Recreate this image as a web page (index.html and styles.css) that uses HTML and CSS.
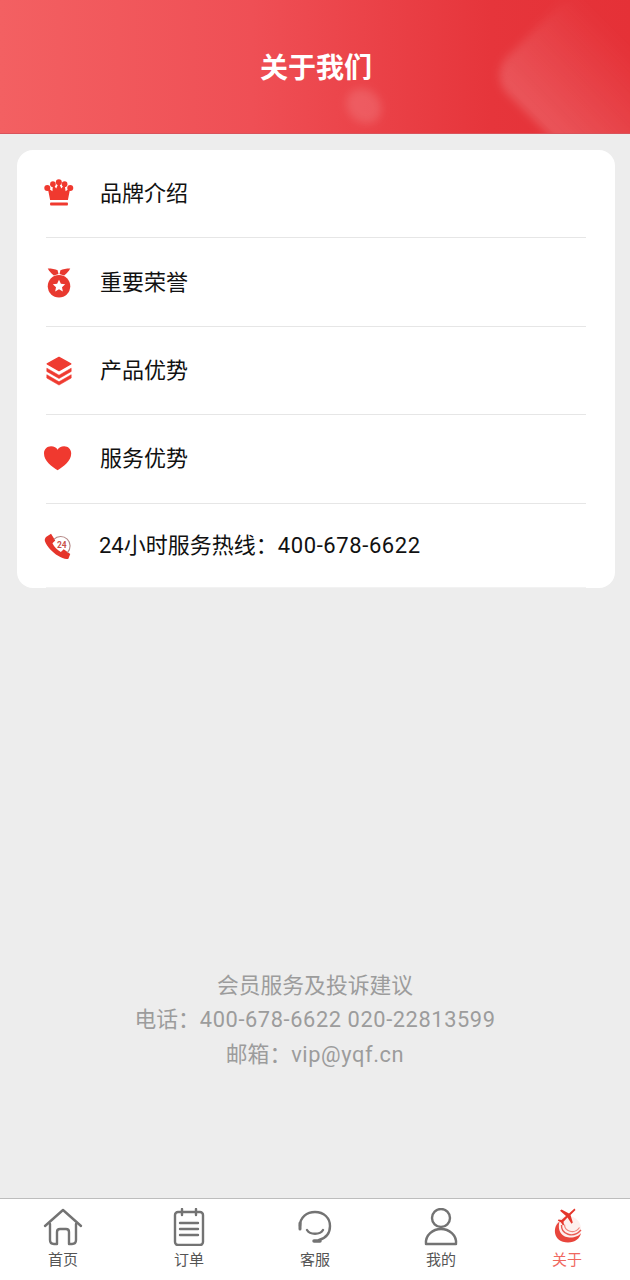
FILE: index.html

```html
<!DOCTYPE html>
<html lang="zh-CN">
<head>
  <meta charset="UTF-8" />
  <title>关于我们</title>
  <link rel="stylesheet" href="styles.css">
</head>
<body>
  <div class="page">
    <header class="top">
      <span class="blob blob-big"></span>
      <span class="blob blob-small"></span>
      <h1>关于我们</h1>
    </header>

    <ul class="card">
      <li class="row">
        <svg class="row-icon" viewBox="0 0 32 32" fill="#f0392f">
          <circle cx="3.5" cy="9.5" r="3.2"/><circle cx="28" cy="9.5" r="3.2"/>
          <circle cx="9.5" cy="5.5" r="3"/><circle cx="22" cy="5.5" r="3"/>
          <circle cx="15.8" cy="3.5" r="3.2"/>
          <path d="M4 9.5 L9 13 L9.5 5.5 L13 10 L15.8 4 L18.5 10 L22 5.5 L23 13 L28 9.5 L25.5 22.5 H6.5 Z"/>
          <rect x="6.5" y="25" width="19" height="3.2" rx="0.8"/>
        </svg>
        <span>品牌介绍</span>
      </li>
      <li class="row">
        <svg class="row-icon" viewBox="0 0 32 32" fill="#e8392f">
          <path d="M4 0.5 C8 0.5 12 1 14.5 2.5 L15.5 6.5 L10.5 8 C8 6 5.5 3.5 4 0.5 Z"/>
          <path d="M28 0.5 C24 0.5 20 1 17.5 2.5 L16.5 6.5 L21.5 8 C24 6 26.5 3.5 28 0.5 Z"/>
          <circle cx="16" cy="19.5" r="12"/>
          <path d="M16 12.5 L18 16.8 L22.6 17.3 L19.2 20.4 L20.1 25 L16 22.7 L11.9 25 L12.8 20.4 L9.4 17.3 L14 16.8 Z" fill="#fff"/>
        </svg>
        <span>重要荣誉</span>
      </li>
      <li class="row">
        <svg class="row-icon" viewBox="0 0 32 32" fill="#ef3b31" stroke="#ef3b31" stroke-linejoin="round">
          <path d="M16 1.5 L28.5 8.5 L16 15.5 L3.5 8.5 Z" stroke-width="1.6"/>
          <path d="M3 13 L16 20.5 L29 13 V16.5 L16 24 L3 16.5 Z" stroke-width="0.6"/>
          <path d="M3 20 L16 27.5 L29 20 V23.5 L16 31 L3 23.5 Z" stroke-width="0.6"/>
        </svg>
        <span>产品优势</span>
      </li>
      <li class="row">
        <svg class="row-icon" viewBox="0 0 32 32" fill="#f0392f">
          <path d="M14.5 28 C8 23.5 0 18 0 10 C0 5.5 3.5 2.5 7.5 2.5 C10.8 2.5 13.3 4 14.5 6 C15.7 4 18.2 2.5 21.5 2.5 C25.5 2.5 29 5.5 29 10 C29 18 21 23.5 14.5 28 Z"/>
        </svg>
        <span>服务优势</span>
      </li>
      <li class="row row-phone">
        <svg class="row-icon" viewBox="0 0 32 32">
          <path d="M2.5 6 L7.5 3 L12 10 L9 13 C11 17 14 20 18 22.5 L21 19.5 L28 24.5 L26 29.5 C23.5 30.5 19 29 15 26.5 C9 23 3 16.5 1 11 C0.5 9 1 7.5 2.5 6 Z" fill="#e5352b"/>
          <path d="M10.5 9 A10 10 0 1 1 25 23" fill="none" stroke="#b58a88" stroke-width="1.2"/>
          <text class="phone-hours" x="19" y="18">24</text>
        </svg>
        <span>24小时服务热线：<span class="num">400-678-6622</span></span>
      </li>
    </ul>

    <div class="contact">
      <p>会员服务及投诉建议</p>
      <p>电话：<span class="num">400-678-6622 020-22813599</span></p>
      <p>邮箱：<span class="num">vip@yqf.cn</span></p>
    </div>

    <nav class="tabs">
      <a class="tab">
        <svg viewBox="0 0 40 38" fill="none" stroke="#737373" stroke-width="2.4" stroke-linejoin="round" stroke-linecap="round">
          <path d="M2 18 L20 2 L38 18"/>
          <path d="M7 16 V32 Q7 36 11 36 H14 V24 Q14 21 17 21 H23 Q26 21 26 24 V36 H29 Q33 36 33 32 V16"/>
        </svg>
        <span>首页</span>
      </a>
      <a class="tab">
        <svg viewBox="0 0 40 38" fill="none" stroke="#737373" stroke-width="2.4" stroke-linecap="round">
          <rect x="6" y="4" width="28" height="33" rx="3"/>
          <path d="M13 1 V7 M27 1 V7 M11 15 H29 M11 21 H29 M11 27 H29"/>
        </svg>
        <span>订单</span>
      </a>
      <a class="tab">
        <svg viewBox="0 0 40 38" fill="none" stroke="#737373" stroke-width="2.4" stroke-linecap="round">
          <path d="M5 18 C5 9 12 4 20 4 C29 4 35 10 35 18 C35 25 31 30 24 32"/>
          <path d="M5 15 V21" stroke-width="3"/>
          <path d="M12 22 C15 27 25 27 28 22"/>
          <path d="M19 33 H25" stroke-width="3.5"/>
        </svg>
        <span>客服</span>
      </a>
      <a class="tab">
        <svg viewBox="0 0 40 38" fill="none" stroke="#737373" stroke-width="2.4" stroke-linejoin="round">
          <circle cx="20" cy="10" r="9"/>
          <path d="M5 36 C4 27 12 21 20 21 C28 21 36 27 35 36 Z"/>
        </svg>
        <span>我的</span>
      </a>
      <a class="tab tab-on">
        <svg viewBox="0 0 40 38">
          <circle cx="21" cy="21" r="13" fill="#fdf0ef"/>
          <path d="M12.5 13.5 C5 19 6 34.5 21 34.5 C28 34.5 33 30.5 34 25 C29 32.5 8 32 12.5 13.5 Z" fill="#e8453c"/>
          <path d="M14.5 17 C14 26 26 31 34 22" fill="none" stroke="#ea5a52" stroke-width="1.4"/>
          <path d="M17.5 16.5 C17.5 23 27 27 32.5 19.5" fill="none" stroke="#f0847c" stroke-width="1.2"/>
          <path d="M27.5 0.5 L22 5.5 L14.5 1.5 L13 2.7 L19 8 L14.5 12 L11.5 11.5 L10.8 12.5 L14 14.5 L16 17.5 L17 16.7 L16.5 13.8 L20.5 9.5 L24.5 15.8 L25.8 14.5 L23.5 7 L28.5 2 Z" fill="#e5352b"/>
        </svg>
        <span>关于</span>
      </a>
    </nav>
  </div>
</body>
</html>
```

FILE: styles.css

```css
* {
  box-sizing: border-box;
}
body {
  margin: 0;
  background: #ededed;
  font-family: Roboto, "Noto Sans CJK SC", sans-serif;
  color: #111;
}
.page {
  display: flex;
  flex-direction: column;
  height: 1280px;
  overflow: hidden;
}

/* red title band */
.top {
  position: relative;
  flex: none;
  height: 134px;
  padding: 48px 0 0 2px;
  overflow: hidden;
  text-align: center;
  background: linear-gradient(90deg, #f36062 0%, #ef4f55 40%, #e6353b 78%, #e53137 100%);
  border-bottom: 1px solid #d9535b;
}
.top h1 {
  position: relative;
  margin: 0;
  font-size: 28px;
  line-height: 42px;
  font-weight: 700;
  color: #fff;
}
.blob {
  position: absolute;
  display: block;
}
.blob-big {
  left: 520px;
  top: 0;
  width: 150px;
  height: 150px;
  border-radius: 26px;
  transform: rotate(45deg);
  background: linear-gradient(0deg, rgba(255,255,255,0.17), rgba(255,255,255,0) 80%);
  filter: blur(4px);
}
.blob-small {
  left: 345px;
  top: 90px;
  width: 38px;
  height: 32px;
  border-radius: 50%;
  transform: rotate(45deg);
  background: rgba(255,255,255,0.13);
  filter: blur(4px);
}

/* menu card */
.card {
  flex: none;
  margin: 16px 15px 0 17px;
  padding: 0 29px;
  list-style: none;
  background: #fff;
  border-radius: 16px;
}
.row {
  display: flex;
  align-items: center;
  gap: 26px;
  height: 88.4px;
  padding-bottom: 5px;
  border-bottom: 1px solid #e6e6e6;
  font-size: 22px;
}
.row-icon {
  flex: none;
  width: 30px;
  height: 30px;
  margin: 6px 0 0 -2px;
}
.row-phone {
  height: 84px;
  gap: 25px;
  border-bottom-color: #f2f2f2;
}
.num {
  letter-spacing: 0.6px;
}
.phone-hours {
  font-family: Roboto, sans-serif;
  font-size: 9px;
  font-weight: 700;
  text-anchor: middle;
  fill: #c9504a;
}

/* complaint contacts */
.contact {
  flex: none;
  margin-top: auto;
  padding-bottom: 126px;
  text-align: center;
  font-size: 21.8px;
  line-height: 34.5px;
  color: #9c9c9c;
}
.contact p {
  margin: 0;
}

/* bottom tabs */
.tabs {
  flex: none;
  display: grid;
  grid-template-columns: repeat(5, 1fr);
  height: 82px;
  padding-top: 9px;
  background: #fff;
  border-top: 1px solid #bdbdbd;
}
.tab {
  display: flex;
  flex-direction: column;
  align-items: center;
  font-size: 15px;
  line-height: 20px;
  color: #555;
}
.tab svg {
  width: 40px;
  height: 38px;
  margin-bottom: 4px;
}
.tab-on {
  color: #f0685f;
}
```
